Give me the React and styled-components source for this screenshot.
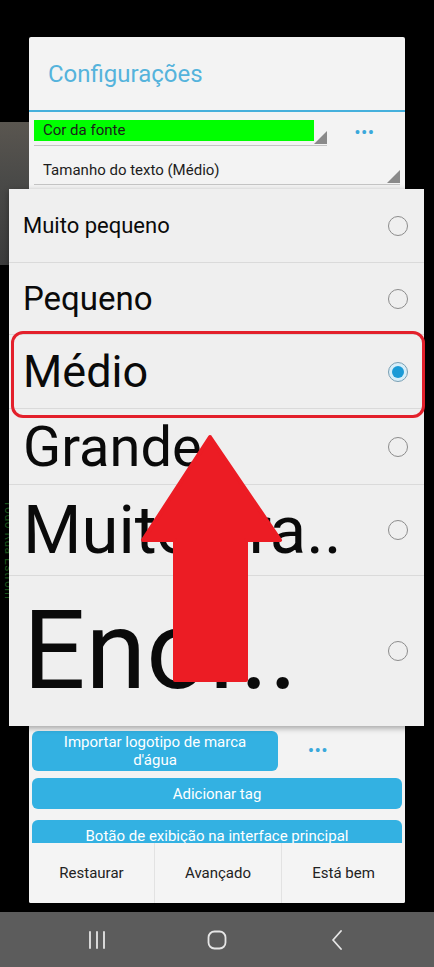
import React from 'react'
import styled, { createGlobalStyle } from 'styled-components'

const GlobalStyle = createGlobalStyle`
  html, body { margin: 0; padding: 0; background: #000; }
  body { font-family: Roboto, "Noto Sans", "Liberation Sans", sans-serif; }
  * { box-sizing: border-box; }
`

const Screen = styled.div`
  position: relative;
  width: 434px;
  height: 967px;
  background: #000;
  display: flex;
  flex-direction: column;
  overflow: hidden;
`

const BackdropMap = styled.div`
  position: absolute;
  left: 0;
  top: 122px;
  width: 29px;
  height: 143px;
  background: linear-gradient(180deg, #5a5650 0%, #4a4a48 40%, #3c3c3c 100%);
`

const BackdropText = styled.div`
  position: absolute;
  left: 2px;
  top: 500px;
  writing-mode: vertical-rl;
  font-size: 12px;
  color: #1d5a1d;
  letter-spacing: 0.5px;
`

const Dialog = styled.div`
  position: relative;
  margin: 37px 29px 0;
  height: 866px;
  background: #f3f3f3;
  border-radius: 2px;
  display: flex;
  flex-direction: column;
  overflow: hidden;
`

const Title = styled.div`
  height: 73px;
  padding-left: 19px;
  display: flex;
  align-items: center;
  font-size: 24px;
  color: #55b3dc;
`

const Rule = styled.div`
  height: 2px;
  background: #45b0dc;
`

const Body = styled.div`
  flex: 1;
  display: flex;
  flex-direction: column;
  padding: 0 3px;
  overflow: hidden;
`

const SpinnerRow = styled.div`
  display: flex;
  align-items: center;
  margin-top: ${p => p.$top}px;
`

const Spinner = styled.div`
  position: relative;
  width: ${p => p.$width}px;
  margin-left: 2px;
  padding-bottom: 4px;
  border-bottom: 1px solid #c4c4c4;
`

const Corner = styled.span`
  position: absolute;
  right: 0;
  bottom: 1px;
  width: 0;
  height: 0;
  border-left: 13px solid transparent;
  border-bottom: 13px solid #8a8a8a;
`

const SpinnerText = styled.div`
  height: ${p => (p.$green ? 21 : 20)}px;
  width: ${p => (p.$green ? '280px' : 'auto')};
  background: ${p => (p.$green ? '#00ff00' : 'transparent')};
  padding-left: 9px;
  font-size: 15px;
  line-height: ${p => (p.$green ? 21 : 20)}px;
  color: #1c1c1c;
`

const Dots = styled.div`
  flex: ${p => (p.$width ? `0 0 ${p.$width}px` : 1)};
  text-align: center;
  color: #3aa8db;
  font-size: 16px;
  font-weight: 700;
  letter-spacing: 1px;
  line-height: 1;
`

const BottomGroup = styled.div`
  margin-top: auto;
  margin-bottom: -9px;
  display: flex;
  flex-direction: column;
`

const ActionRow = styled.div`
  display: flex;
  align-items: center;
  margin-bottom: ${p => p.$gap}px;
`

const BlueButton = styled.div`
  width: ${p => p.$width || '100%'};
  height: ${p => p.$height}px;
  background: #33b1e2;
  border-radius: 6px;
  color: #fff;
  font-size: 15px;
  line-height: 18px;
  display: flex;
  align-items: center;
  justify-content: center;
  text-align: center;
  padding: 0 ${p => p.$pad || 8}px;
  flex-shrink: 0;
`

const ButtonBar = styled.div`
  height: 60px;
  display: grid;
  grid-template-columns: 125px 127px 1fr;
  background: #f4f4f4;
`

const BarButton = styled.div`
  display: flex;
  align-items: center;
  justify-content: center;
  font-size: 15px;
  color: #222;
  border-left: ${p => (p.$first ? 'none' : '1px solid #e2e2e2')};
`

const NavBar = styled.div`
  margin-top: auto;
  height: 55px;
  background: #5c5c5c;
  display: grid;
  grid-template-columns: 1fr 1fr 1fr;
  align-items: center;
  justify-items: center;
  padding: 0 37px;
`

const Popup = styled.div`
  position: absolute;
  left: 9px;
  top: 189px;
  width: 415px;
  height: 537px;
  background: #efefef;
  box-shadow: 0 2px 6px rgba(0, 0, 0, 0.35);
  display: flex;
  flex-direction: column;
`

const Option = styled.div`
  height: ${p => p.$height}px;
  display: flex;
  align-items: center;
  justify-content: space-between;
  padding: 0 16px 0 14px;
  border-top: ${p => (p.$first ? 'none' : '1px solid #dadada')};
  overflow: hidden;
`

const OptionLabel = styled.span`
  font-size: ${p => p.$size}px;
  color: #0a0a0a;
  white-space: nowrap;
  line-height: 1;
`

const Radio = styled.span`
  width: 20px;
  height: 20px;
  border-radius: 50%;
  border: 1.5px solid ${p => (p.$checked ? '#7a9fb3' : '#8c8c8c')};
  background: ${p => (p.$checked ? '#d6eef9' : 'transparent')};
  display: flex;
  align-items: center;
  justify-content: center;
  flex-shrink: 0;

  &::after {
    content: '';
    width: 12px;
    height: 12px;
    border-radius: 50%;
    background: #1a9ad6;
    display: ${p => (p.$checked ? 'block' : 'none')};
  }
`

const Highlight = styled.div`
  position: absolute;
  left: 11px;
  top: 331px;
  width: 414px;
  height: 87px;
  border: 3px solid #e3202b;
  border-radius: 12px;
`

const Arrow = styled.svg`
  position: absolute;
  left: 140px;
  top: 434px;
`

const options = [
  { label: 'Muito pequeno', size: 22, height: 73 },
  { label: 'Pequeno', size: 33, height: 72 },
  { label: 'Médio', size: 45, height: 74, checked: true },
  { label: 'Grande', size: 56, height: 76 },
  { label: 'Muito gra..', size: 67, height: 91 },
  { label: 'Enor..', size: 110, height: 151 },
]

export default function App() {
  return (
    <>
      <GlobalStyle />
      <Screen>
        <BackdropMap />
        <BackdropText>Todo Rua Estrom</BackdropText>

        <Dialog>
          <Title>Configurações</Title>
          <Rule />
          <Body>
            <SpinnerRow $top={8}>
              <Spinner $width={293}>
                <SpinnerText $green>Cor da fonte</SpinnerText>
                <Corner />
              </Spinner>
              <Dots>•••</Dots>
            </SpinnerRow>
            <SpinnerRow $top={14}>
              <Spinner $width={366}>
                <SpinnerText>Tamanho do texto (Médio)</SpinnerText>
                <Corner />
              </Spinner>
            </SpinnerRow>

            <BottomGroup>
              <ActionRow $gap={7}>
                <BlueButton $width="246px" $height={40} $pad={26}>
                  Importar logotipo de marca d'água
                </BlueButton>
                <Dots $width={80}>•••</Dots>
              </ActionRow>
              <ActionRow $gap={11}>
                <BlueButton $height={31}>Adicionar tag</BlueButton>
              </ActionRow>
              <ActionRow $gap={0}>
                <BlueButton $height={32}>Botão de exibição na interface principal</BlueButton>
              </ActionRow>
            </BottomGroup>
          </Body>
          <ButtonBar>
            <BarButton $first>Restaurar</BarButton>
            <BarButton>Avançado</BarButton>
            <BarButton>Está bem</BarButton>
          </ButtonBar>
        </Dialog>

        <NavBar>
          <svg width="18" height="18" viewBox="0 0 18 18">
            <g stroke="#e6e6e6" strokeWidth="1.8" strokeLinecap="round">
              <line x1="2" y1="1" x2="2" y2="17" />
              <line x1="9" y1="1" x2="9" y2="17" />
              <line x1="16" y1="1" x2="16" y2="17" />
            </g>
          </svg>
          <svg width="20" height="20" viewBox="0 0 20 20">
            <rect x="1.5" y="1.5" width="17" height="17" rx="6" fill="none" stroke="#e6e6e6" strokeWidth="1.8" />
          </svg>
          <svg width="12" height="20" viewBox="0 0 12 20">
            <polyline points="10,1 2,10 10,19" fill="none" stroke="#e6e6e6" strokeWidth="1.8" strokeLinecap="round" strokeLinejoin="round" />
          </svg>
        </NavBar>

        <Popup>
          {options.map((o, i) => (
            <Option key={o.label} $height={o.height} $first={i === 0}>
              <OptionLabel $size={o.size}>{o.label}</OptionLabel>
              <Radio $checked={o.checked} />
            </Option>
          ))}
        </Popup>

        <Highlight />

        <Arrow width="144" height="250" viewBox="0 0 144 250">
          <polygon
            points="70,3 140,106 106,106 106,246 35,246 35,106 3,106"
            fill="#ec1c24"
            stroke="#ec1c24"
            strokeWidth="4"
            strokeLinejoin="round"
          />
        </Arrow>
      </Screen>
    </>
  )
}
